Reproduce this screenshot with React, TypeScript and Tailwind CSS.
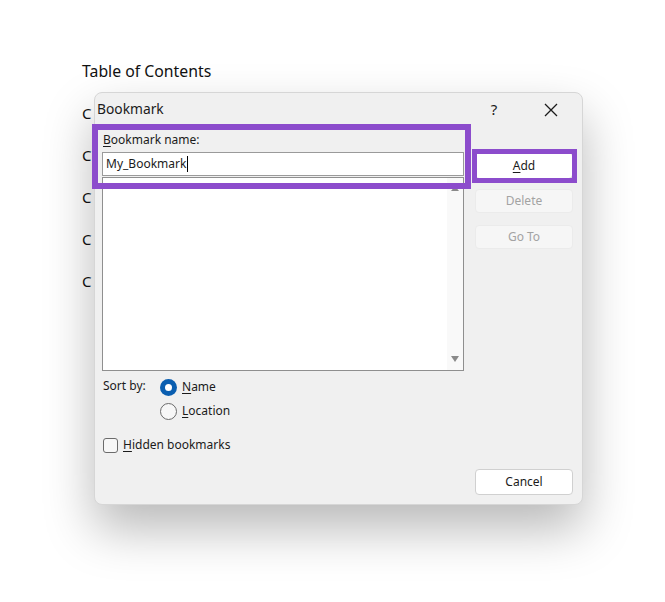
import * as React from "react";

const ui = { fontFamily: '"Noto Sans", "Open Sans", sans-serif' };

// Small underlined access-key letter, like Windows dialogs show
const Key = ({ children }: { children: React.ReactNode }) => (
  <span className="underline underline-offset-2">{children}</span>
);

const Radio = ({ checked, children }: { checked?: boolean; children: React.ReactNode }) => (
  <div className="flex h-6 items-center gap-[5px]">
    {checked ? (
      <span className="flex size-[17px] items-center justify-center rounded-full bg-[#0a5eb0]">
        <span className="size-[7px] rounded-full bg-white" />
      </span>
    ) : (
      <span className="size-[17px] rounded-full border border-[#6b6b6b] bg-[#f7f7f7]" />
    )}
    <span>{children}</span>
  </div>
);

const SideButton = ({ children, disabled }: { children: React.ReactNode; disabled?: boolean }) => (
  <div
    className={
      disabled
        ? "flex h-6 items-center justify-center rounded-[4px] border border-[#ebebeb] bg-[#f6f6f6] text-[#a3a3a3]"
        : "flex h-[27px] items-center justify-center rounded-[4px] border border-[#d0d0d0] bg-white text-[#1b1b1b]"
    }
  >
    {children}
  </div>
);

export default function App() {
  return (
    <div className="relative h-[602px] w-[665px] overflow-hidden bg-white" style={ui}>
      {/* Document behind the dialog */}
      <div className="flex flex-col pl-[82px] pt-[60px] text-[15.8px] text-[#111]">
        <div className="h-[32px]">Table of Contents</div>
        <div className="flex flex-col gap-[20px] pt-[10px] text-[15px]">
          {[0, 1, 2, 3, 4].map((i) => (
            <div key={i} className="h-[22px] leading-[22px]">
              C
            </div>
          ))}
        </div>
      </div>

      {/* Bookmark dialog */}
      <div className="absolute left-[94px] top-[92px] flex h-[413px] w-[489px] flex-col rounded-[8px] border border-[#d6d6d6] bg-[#f0f0f0] text-[12px] text-[#1b1b1b] shadow-[0_24px_50px_rgba(0,0,0,0.28)]">
        {/* Title bar */}
        <div className="flex h-[33px] items-center pl-[2px]">
          <span className="text-[13.8px]">Bookmark</span>
          <span className="ml-auto w-[20px] text-center text-[15px]">?</span>
          <span className="ml-[37px] mr-[21px] flex w-[20px] justify-center">
            <svg width="14" height="14" viewBox="0 0 14 14" stroke="#1b1b1b" strokeWidth="1.3">
              <path d="M1 1L13 13M13 1L1 13" />
            </svg>
          </span>
        </div>

        <div className="flex flex-1 pl-[7px] pr-[9px]">
          {/* Left column */}
          <div className="flex w-[362px] flex-col">
            <div className="mt-[5px] h-[18px] leading-[18px] pl-px">
              <Key>B</Key>ookmark name:
            </div>
            <div className="mt-[3px] flex h-[24px] items-center border border-[#9a9a9a] bg-white pl-[3px]">
              My_Bookmark
              <span className="ml-px h-[16px] w-px bg-black" />
            </div>
            <div className="mt-px flex h-[194px] border border-[#8f8f8f] bg-white">
              <div className="flex-1" />
              <div className="flex w-[16px] flex-col items-center justify-between bg-[#f9f9f9] py-[8px]">
                <svg width="8" height="5" viewBox="0 0 8 5">
                  <path d="M0 5L4 0L8 5Z" fill="#8a8a8a" />
                </svg>
                <svg width="8" height="6" viewBox="0 0 8 6">
                  <path d="M0 0L8 0L4 6Z" fill="#8a8a8a" />
                </svg>
              </div>
            </div>

            {/* Sort by */}
            <div className="mt-[4px] flex">
              <div className="w-[58px] pl-px pt-[2px]">Sort by:</div>
              <div className="flex flex-col">
                <Radio checked>
                  <Key>N</Key>ame
                </Radio>
                <Radio>
                  <Key>L</Key>ocation
                </Radio>
              </div>
            </div>

            <div className="mt-[10px] flex h-6 items-center gap-[5px] pl-px">
              <span className="size-[15px] rounded-[3px] border border-[#6b6b6b] bg-[#f7f7f7]" />
              <span>
                <Key>H</Key>idden bookmarks
              </span>
            </div>
          </div>

          {/* Right column */}
          <div className="ml-auto flex w-[98px] flex-col">
            <div className="mt-[26px]">
              <SideButton>
                <Key>A</Key>dd
              </SideButton>
            </div>
            <div className="mt-[10px]">
              <SideButton disabled>Delete</SideButton>
            </div>
            <div className="mt-[12px]">
              <SideButton disabled>Go To</SideButton>
            </div>
            <div className="mb-[9px] mt-auto">
              <div className="flex h-[26px] items-center justify-center rounded-[4px] border border-[#d0d0d0] bg-white">
                Cancel
              </div>
            </div>
          </div>
        </div>
      </div>

      {/* Purple highlight boxes */}
      <div className="absolute left-[92px] top-[124px] h-[65px] w-[379px] border-[6px] border-[#8c4ccc]" />
      <div className="absolute left-[472px] top-[149px] h-[34px] w-[105px] border-[5px] border-[#8c4ccc]" />
    </div>
  );
}
